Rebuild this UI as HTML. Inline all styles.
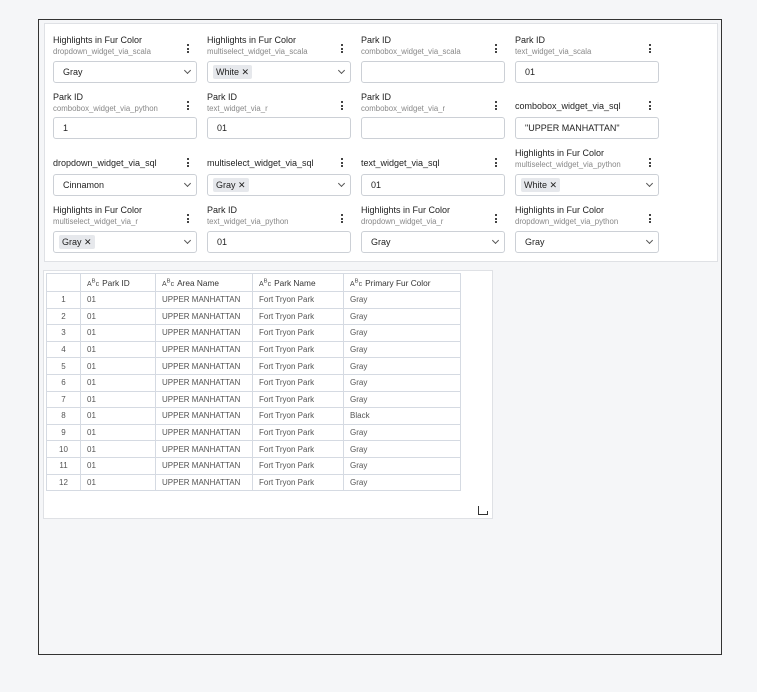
<!DOCTYPE html><html><head><style>
body{margin:0;width:757px;height:692px;background:#f5f6f8;font-family:"Liberation Sans",sans-serif;position:relative;overflow:hidden}
.frame{position:absolute;left:38px;top:19px;width:682px;height:634px;border:1px solid #333;background:#f5f6f8}
.panel{position:absolute;left:44px;top:23px;width:672px;height:237px;background:#fff;border:1px solid #dfe1e5}
.a{position:absolute;white-space:nowrap}
.lb{font-size:9px;color:#222}
.sb{font-size:7.8px;color:#888}
.in{position:absolute;width:142px;height:20px;border:1px solid #ccd0d6;border-radius:3px;background:#fff;font-size:9px;color:#222;line-height:20px;box-sizing:content-box}
.in span.v{position:absolute;left:9px}
.chev{position:absolute;right:6px;top:6px;width:4px;height:4px;border-right:1px solid #555;border-bottom:1px solid #555;transform:rotate(45deg)}
.tag{position:absolute;left:5px;top:3px;height:14px;line-height:14px;background:#e6e8ec;border-radius:2px;padding:0 3px;font-size:9px}
.keb{position:absolute;width:2px}
.keb i{display:block;width:2px;height:2px;background:#444;margin-bottom:1.5px}
.tp{position:absolute;left:43px;top:270px;width:448px;height:247px;background:#fff;border:1px solid #dfe1e5}
table{position:absolute;left:46px;top:273px;border-collapse:collapse;font-size:8px;color:#555}
td,th{border:1px solid #d5dae2;height:15.6px;padding:0 0 0 6px;text-align:left;white-space:nowrap}
th{font-weight:normal;color:#333;height:17px;font-size:8.3px}
td.n{text-align:center;padding:0}
.ic{font-size:7px;color:#444;margin-right:3px}
</style></head><body>
<div class="frame"></div>
<div class="panel"></div>
<div class="a lb" style="left:53px;top:35px">Highlights in Fur Color</div><div class="a sb" style="left:53px;top:47px">dropdown_widget_via_scala</div>
<div class="a lb" style="left:207px;top:35px">Highlights in Fur Color</div><div class="a sb" style="left:207px;top:47px">multiselect_widget_via_scala</div>
<div class="a lb" style="left:361px;top:35px">Park ID</div><div class="a sb" style="left:361px;top:47px">combobox_widget_via_scala</div>
<div class="a lb" style="left:515px;top:35px">Park ID</div><div class="a sb" style="left:515px;top:47px">text_widget_via_scala</div>
<div class="in" style="left:53px;top:61px"><span class="v">Gray</span><div class="chev"></div></div>
<div class="in" style="left:207px;top:61px"><span class="tag">White ✕</span><div class="chev"></div></div>
<div class="in" style="left:361px;top:61px"></div>
<div class="in" style="left:515px;top:61px"><span class="v">01</span></div>

<div class="a lb" style="left:53px;top:92px">Park ID</div><div class="a sb" style="left:53px;top:104px">combobox_widget_via_python</div>
<div class="a lb" style="left:207px;top:92px">Park ID</div><div class="a sb" style="left:207px;top:104px">text_widget_via_r</div>
<div class="a lb" style="left:361px;top:92px">Park ID</div><div class="a sb" style="left:361px;top:104px">combobox_widget_via_r</div>
<div class="a lb" style="left:515px;top:101px">combobox_widget_via_sql</div>
<div class="in" style="left:53px;top:117px"><span class="v">1</span></div>
<div class="in" style="left:207px;top:117px"><span class="v">01</span></div>
<div class="in" style="left:361px;top:117px"></div>
<div class="in" style="left:515px;top:117px"><span class="v">"UPPER MANHATTAN"</span></div>

<div class="a lb" style="left:53px;top:158px">dropdown_widget_via_sql</div>
<div class="a lb" style="left:207px;top:158px">multiselect_widget_via_sql</div>
<div class="a lb" style="left:361px;top:158px">text_widget_via_sql</div>
<div class="a lb" style="left:515px;top:148px">Highlights in Fur Color</div><div class="a sb" style="left:515px;top:160px">multiselect_widget_via_python</div>
<div class="in" style="left:53px;top:174px"><span class="v">Cinnamon</span><div class="chev"></div></div>
<div class="in" style="left:207px;top:174px"><span class="tag">Gray ✕</span><div class="chev"></div></div>
<div class="in" style="left:361px;top:174px"><span class="v">01</span></div>
<div class="in" style="left:515px;top:174px"><span class="tag">White ✕</span><div class="chev"></div></div>

<div class="a lb" style="left:53px;top:205px">Highlights in Fur Color</div><div class="a sb" style="left:53px;top:217px">multiselect_widget_via_r</div>
<div class="a lb" style="left:207px;top:205px">Park ID</div><div class="a sb" style="left:207px;top:217px">text_widget_via_python</div>
<div class="a lb" style="left:361px;top:205px">Highlights in Fur Color</div><div class="a sb" style="left:361px;top:217px">dropdown_widget_via_r</div>
<div class="a lb" style="left:515px;top:205px">Highlights in Fur Color</div><div class="a sb" style="left:515px;top:217px">dropdown_widget_via_python</div>
<div class="in" style="left:53px;top:231px"><span class="tag">Gray ✕</span><div class="chev"></div></div>
<div class="in" style="left:207px;top:231px"><span class="v">01</span></div>
<div class="in" style="left:361px;top:231px"><span class="v">Gray</span><div class="chev"></div></div>
<div class="in" style="left:515px;top:231px"><span class="v">Gray</span><div class="chev"></div></div>

<div class="keb" style="left:187px;top:44px"><i></i><i></i><i></i></div>
<div class="keb" style="left:341px;top:44px"><i></i><i></i><i></i></div>
<div class="keb" style="left:495px;top:44px"><i></i><i></i><i></i></div>
<div class="keb" style="left:649px;top:44px"><i></i><i></i><i></i></div>
<div class="keb" style="left:187px;top:101px"><i></i><i></i><i></i></div>
<div class="keb" style="left:341px;top:101px"><i></i><i></i><i></i></div>
<div class="keb" style="left:495px;top:101px"><i></i><i></i><i></i></div>
<div class="keb" style="left:649px;top:101px"><i></i><i></i><i></i></div>
<div class="keb" style="left:187px;top:158px"><i></i><i></i><i></i></div>
<div class="keb" style="left:341px;top:158px"><i></i><i></i><i></i></div>
<div class="keb" style="left:495px;top:158px"><i></i><i></i><i></i></div>
<div class="keb" style="left:649px;top:158px"><i></i><i></i><i></i></div>
<div class="keb" style="left:187px;top:214px"><i></i><i></i><i></i></div>
<div class="keb" style="left:341px;top:214px"><i></i><i></i><i></i></div>
<div class="keb" style="left:495px;top:214px"><i></i><i></i><i></i></div>
<div class="keb" style="left:649px;top:214px"><i></i><i></i><i></i></div>

<div class="tp"></div>
<table>
<tr><th style="width:27px"></th><th style="width:68px"><span class="ic">A<sup>B</sup>c</span>Park ID</th><th style="width:90px"><span class="ic">A<sup>B</sup>c</span>Area Name</th><th style="width:84px"><span class="ic">A<sup>B</sup>c</span>Park Name</th><th style="width:110px"><span class="ic">A<sup>B</sup>c</span>Primary Fur Color</th></tr>
<tr><td class="n">1</td><td>01</td><td>UPPER MANHATTAN</td><td>Fort Tryon Park</td><td>Gray</td></tr>
<tr><td class="n">2</td><td>01</td><td>UPPER MANHATTAN</td><td>Fort Tryon Park</td><td>Gray</td></tr>
<tr><td class="n">3</td><td>01</td><td>UPPER MANHATTAN</td><td>Fort Tryon Park</td><td>Gray</td></tr>
<tr><td class="n">4</td><td>01</td><td>UPPER MANHATTAN</td><td>Fort Tryon Park</td><td>Gray</td></tr>
<tr><td class="n">5</td><td>01</td><td>UPPER MANHATTAN</td><td>Fort Tryon Park</td><td>Gray</td></tr>
<tr><td class="n">6</td><td>01</td><td>UPPER MANHATTAN</td><td>Fort Tryon Park</td><td>Gray</td></tr>
<tr><td class="n">7</td><td>01</td><td>UPPER MANHATTAN</td><td>Fort Tryon Park</td><td>Gray</td></tr>
<tr><td class="n">8</td><td>01</td><td>UPPER MANHATTAN</td><td>Fort Tryon Park</td><td>Black</td></tr>
<tr><td class="n">9</td><td>01</td><td>UPPER MANHATTAN</td><td>Fort Tryon Park</td><td>Gray</td></tr>
<tr><td class="n">10</td><td>01</td><td>UPPER MANHATTAN</td><td>Fort Tryon Park</td><td>Gray</td></tr>
<tr><td class="n">11</td><td>01</td><td>UPPER MANHATTAN</td><td>Fort Tryon Park</td><td>Gray</td></tr>
<tr><td class="n">12</td><td>01</td><td>UPPER MANHATTAN</td><td>Fort Tryon Park</td><td>Gray</td></tr>
</table>
<div class="a" style="left:478px;top:506px;width:9px;height:8px;border-left:1px solid #333;border-bottom:1px solid #333"></div>
<div class="a" style="left:487px;top:511px;width:1px;height:3px;background:#333"></div>
</body></html>
